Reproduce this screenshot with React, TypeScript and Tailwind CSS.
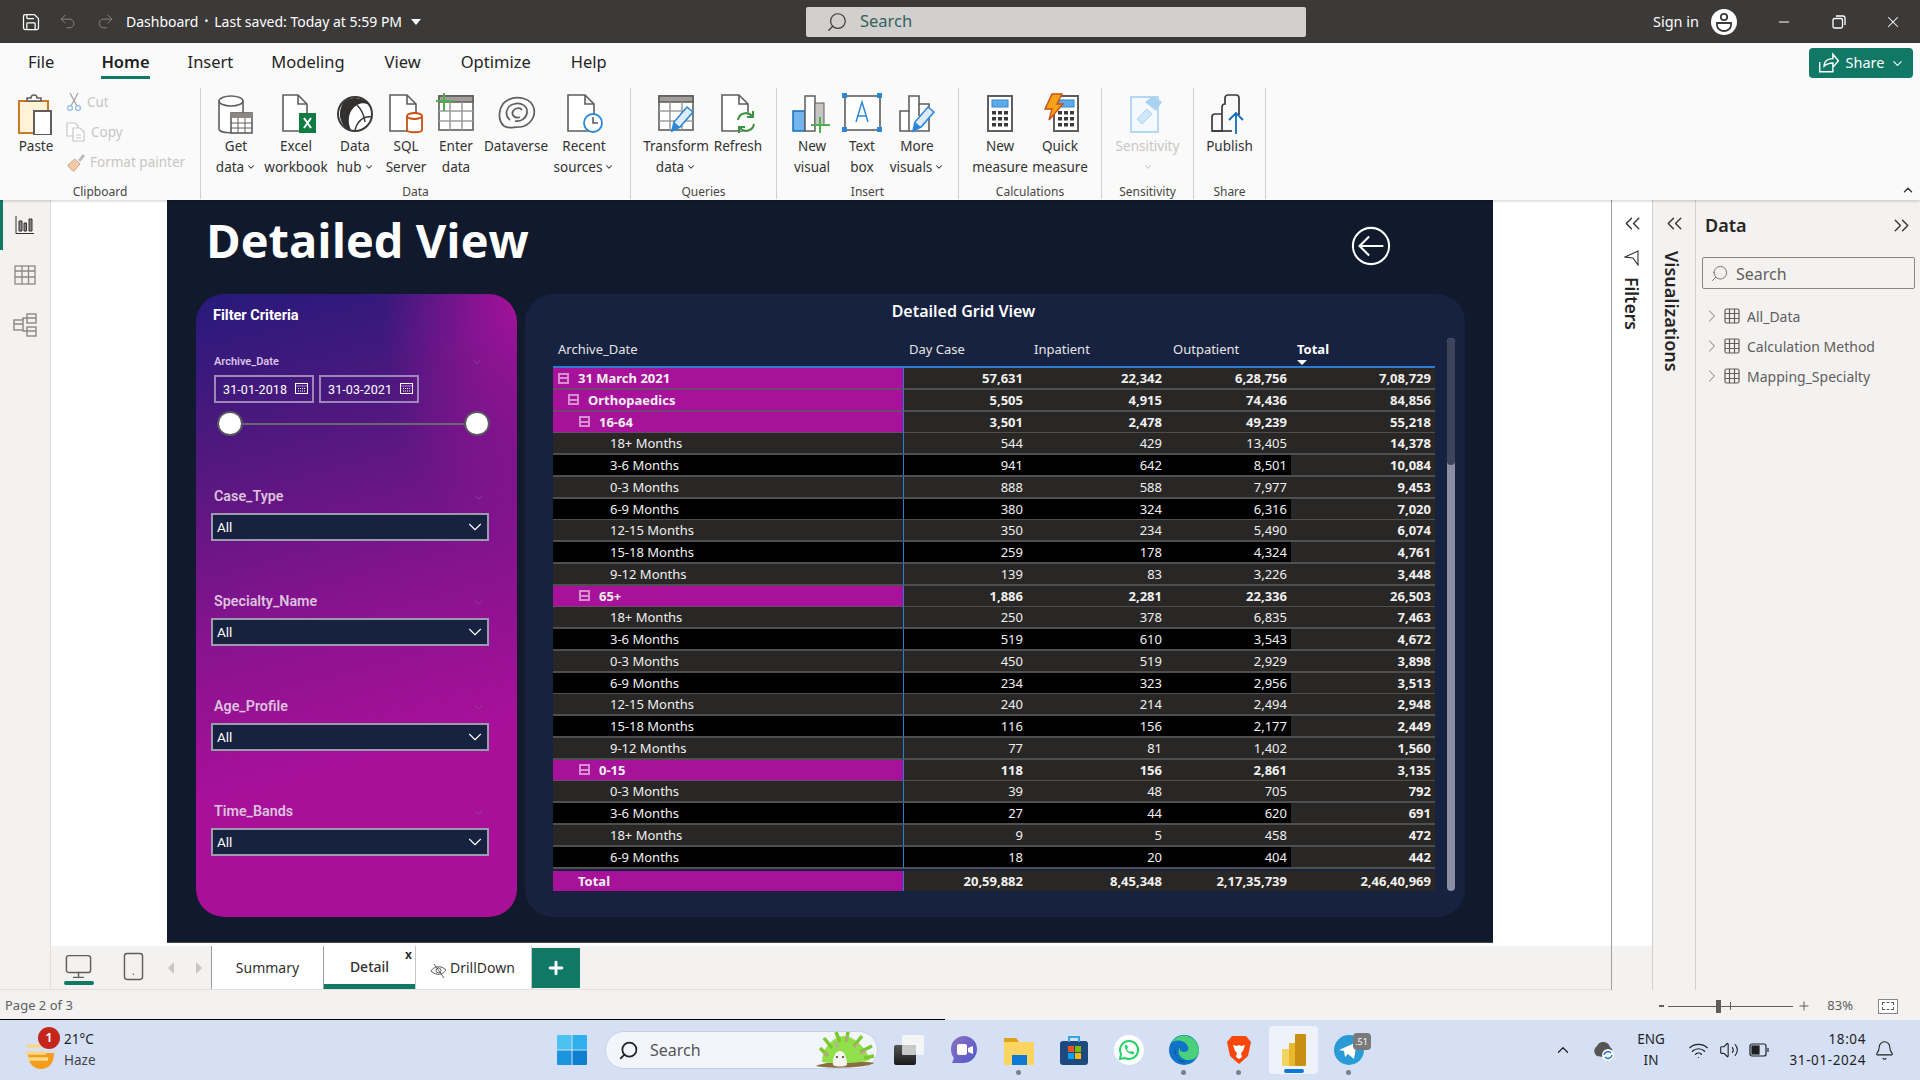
import {
  Bell,
  ChevronDown,
  ChevronRight,
  ChevronUp,
  ChevronsLeft,
  ChevronsRight,
  Minus,
  Monitor,
  Plus,
  Redo2,
  Save,
  Search,
  Smartphone,
  Undo2,
  Volume2,
  Wifi,
  X,
} from "lucide-react";
import type { ReactNode } from "react";

const G = "#605e5c";

const DocShape = ({ x = 8, w = 22, h = 36 }: { x?: number; w?: number; h?: number }) => (
  <path d={`M${x} 2h${w - 9}l9 9v${h - 9}h-${w}z M${x + w - 9} 2v9h9`} fill="#fff" stroke={G} strokeWidth="1.6" />
);

const Pencil = ({ dx = 0, dy = 0 }: { dx?: number; dy?: number }) => (
  <g transform={`translate(${dx} ${dy})`}>
    <path d="M14 36l2-9 13-15 6 5-13 15z" fill="#deecf9" stroke="#2b88d8" strokeWidth="1.6" />
    <path d="M14 36l2-9 6 5z" fill="#2b88d8" />
  </g>
);

const GridShape = () => (
  <g stroke={G} strokeWidth="1.6" fill="#fff">
    <rect x="3" y="3" width="34" height="34" />
    <rect x="3" y="3" width="34" height="6" fill="#a19f9d" />
    <path d="M14 9v28M26 9v28M3 18h34M3 28h34" fill="none" stroke="#a19f9d" />
  </g>
);

const Calc = ({ x = 6 }: { x?: number }) => (
  <g>
    <rect x={x} y="3" width="24" height="35" fill="#fff" stroke={G} strokeWidth="2" />
    <rect x={x + 4} y="7" width="16" height="7" fill="#5ea9e6" stroke="#2b88d8" />
    {[18, 24, 30].map((y) => [4, 10, 16].map((d) => <rect key={`${y}${d}`} x={x + d} y={y} width="4" height="3.5" fill="#3b3a39" />))}
  </g>
);

const ribbonIcons: Record<string, ReactNode> = {
  paste: (
    <>
      <path d="M3 8h29v32H3z" fill="#fff3d6" stroke="#c8792a" strokeWidth="2" />
      <path d="M11 8V5h4a3 3 0 0 1 6 0h4v3z" fill="#fff" stroke={G} strokeWidth="1.5" />
      <rect x="18" y="18" width="17" height="24" fill="#fff" stroke={G} strokeWidth="2" />
    </>
  ),
  getdata: (
    <>
      <path d="M3 8v28c0 5 24 5 24 0V8" fill="#fff" stroke={G} strokeWidth="1.6" />
      <ellipse cx="15" cy="8" rx="12" ry="5" fill="#fff" stroke={G} strokeWidth="1.6" />
      <rect x="15" y="20" width="21" height="20" fill="#fff" stroke={G} strokeWidth="1.6" />
      <rect x="15" y="20" width="21" height="5" fill="#8a8886" />
      <path d="M22 25v15M29 25v15M15 30h21M15 35h21" stroke={G} />
    </>
  ),
  excel: (
    <>
      <DocShape x={7} w={24} />
      <rect x="23" y="20" width="17" height="20" fill="#107c41" />
      <path d="M28 25l7 10M35 25l-7 10" stroke="#fff" strokeWidth="2" />
    </>
  ),
  hub: (
    <>
      <circle cx="20" cy="21" r="17" fill="#fff" stroke="#3b3a39" strokeWidth="2" />
      <path d="M8 10c-6 10-3 24 8 27-4-8-3-20 6-25 5-3 11-2 14 2C32 5 16 1 8 10z" fill="#323130" />
      <path d="M20 37c3-10 9-14 17-13M22 12c4 4 7 9 8 17" fill="none" stroke="#3b3a39" strokeWidth="1.5" />
    </>
  ),
  sql: (
    <>
      <DocShape x={4} w={26} />
      <path d="M21 23v14c0 3 15 3 15 0V23" fill="#fff" stroke="#ca5010" strokeWidth="1.8" />
      <ellipse cx="28.5" cy="23" rx="7.5" ry="3" fill="#fff" stroke="#ca5010" strokeWidth="1.8" />
    </>
  ),
  enter: (
    <>
      <GridShape />
      <path d="M8 0v18M0 8h18" stroke="#4caf50" strokeWidth="2" />
    </>
  ),
  dataverse: (
    <g fill="none" stroke={G} strokeWidth="1.7">
      <path d="M8 33C1 27 2 12 12 7c9-5 24-2 26 9 2 10-7 18-15 18-6 0-11 2-15-1z" />
      <path d="M14 27c-6-5-4-14 4-16 7-2 14 2 13 9-1 6-7 9-12 8" />
      <path d="M24 24c-5 2-9-2-7-6 2-3 7-4 9-1" />
    </g>
  ),
  recent: (
    <>
      <DocShape x={4} w={26} />
      <circle cx="29" cy="30" r="9" fill="#fff" stroke="#2b88d8" strokeWidth="1.8" />
      <path d="M29 24v6h5" fill="none" stroke={G} strokeWidth="1.6" />
    </>
  ),
  transform: (
    <>
      <GridShape />
      <Pencil dx={2} dy={2} />
    </>
  ),
  refresh: (
    <>
      <DocShape x={4} w={26} />
      <circle cx="28" cy="29" r="10" fill="#fff" stroke="none" />
      <path d="M20 27a8 8 0 0 1 14-4M36 31a8 8 0 0 1-14 4" fill="none" stroke="#3f9142" strokeWidth="2" />
      <path d="M35 18v6h-6M21 40v-6h6" fill="none" stroke="#3f9142" strokeWidth="2" />
    </>
  ),
  newvisual: (
    <>
      <rect x="1" y="18" width="12" height="20" fill="#74b5ec" stroke="#106ebe" strokeWidth="1.5" />
      <rect x="13" y="3" width="10" height="35" fill="#fff" stroke={G} strokeWidth="1.5" />
      <rect x="23" y="10" width="9" height="22" fill="#c8c6c4" stroke={G} />
      <path d="M28 24v16M19 32h19" stroke="#4caf50" strokeWidth="2" />
    </>
  ),
  textbox: (
    <>
      <rect x="3" y="3" width="35" height="34" fill="#fff" stroke={G} strokeWidth="1.6" />
      {[[0, 0], [35, 0], [0, 34], [35, 34]].map(([a, b]) => (
        <rect key={`${a}${b}`} x={a} y={b} width="5" height="5" fill="#2b88d8" />
      ))}
      <path d="M14 29l6-20 6 20M16 23h8" fill="none" stroke="#2b88d8" strokeWidth="1.5" />
    </>
  ),
  morevisuals: (
    <>
      <path d="M3 38V18h9V3h10v8h10v27z" fill="#fff" stroke={G} strokeWidth="1.6" />
      <path d="M12 18v20M22 11v12" stroke={G} strokeWidth="1.6" />
      <Pencil dx={2} dy={2} />
    </>
  ),
  newmeasure: <Calc x={8} />,
  quickmeasure: (
    <>
      <Calc x={14} />
      <path d="M12 1h10l-5 10h6L9 27l3-11H5z" fill="#f7a21b" stroke="#ca5010" strokeWidth="1.4" />
    </>
  ),
  sensitivity: (
    <>
      <rect x="4" y="4" width="27" height="35" fill="#f4f9fd" stroke="#a9d3f0" strokeWidth="1.7" />
      <path d="M10 26l10-10 5 5-10 10z" fill="#cfe6f7" stroke="#a9d3f0" />
      <path d="M18 9l8-6 9 6-6 9z" fill="#a9d3f0" />
    </>
  ),
  publish: (
    <g fill="none">
      <path d="M3 38V24a3 3 0 0 1 3-3h7v17zM13 21V14a3 3 0 0 1 3-3V5a3 3 0 0 1 3-3h8a3 3 0 0 1 3 3v17" stroke="#3b3a39" strokeWidth="1.7" />
      <path d="M3 38h20" stroke="#3b3a39" strokeWidth="1.7" />
      <path d="M27 41V20M20 27l7-7 7 7" stroke="#106ebe" strokeWidth="1.8" />
    </g>
  ),
};

const RibbonItem = ({
  icon,
  lines,
  w,
  caret,
  faded,
}: {
  icon: string;
  lines: string[];
  w: number;
  caret?: boolean;
  faded?: boolean;
}) => (
  <div className={`flex flex-col items-center shrink-0 pt-[5px] ${faded ? "text-[#c8c6c4]" : "text-[#323130]"}`} style={{ width: w }}>
    <svg width="41" height="42" viewBox="0 0 41 42" className="shrink-0">
      {ribbonIcons[icon]}
    </svg>
    <div className="mt-[1px] text-[13.5px] leading-[20px] text-center whitespace-nowrap">
      {lines.map((l, i) => (
        <div key={l} className="flex items-center justify-center gap-[2px] h-[20.5px]">
          {l}
          {caret && i === lines.length - 1 && <ChevronDown size={10} strokeWidth={2.5} />}
        </div>
      ))}
    </div>
  </div>
);

const RibbonGroup = ({ label, w, pl = 0, children }: { label: string; w: number; pl?: number; children: ReactNode }) => (
  <div className="flex flex-col shrink-0 border-r border-[#d2d0ce] h-[111px]" style={{ width: w }}>
    <div className="flex flex-1" style={{ paddingLeft: pl }}>
      {children}
    </div>
    <div className="text-[12px] leading-[14px] text-center text-[#484644]">{label}</div>
  </div>
);

const TitleBar = () => (
  <div className="h-[43px] bg-[#3b3a39] flex items-center text-white shrink-0">
    <Save size={20} strokeWidth={1.5} className="ml-[21px]" />
    <Undo2 size={19} strokeWidth={1.2} className="ml-[17px] text-[#8a8886]" />
    <Redo2 size={19} strokeWidth={1.2} className="ml-[19px] text-[#8a8886]" />
    <div className="ml-[11px] w-[306px] text-[14px] flex items-center whitespace-nowrap">
      Dashboard <span className="mx-[6px] text-[10px]">•</span> Last saved: Today at 5:59 PM
      <span className="ml-[9px] border-x-[5px] border-t-[6px] border-x-transparent border-t-white" />
    </div>
    <div className="ml-[374px] w-[500px] h-[30px] bg-[#d2d0ce] rounded-[2px] flex items-center pl-[20px] text-[#33625c] text-[16.5px]">
      <Search size={22} strokeWidth={1.3} className="-scale-x-100 text-[#3b3a39]" />
      <span className="ml-[12px]">Search</span>
    </div>
    <div className="ml-[347px] text-[14.5px] w-[58px]">Sign in</div>
    <div className="w-[26px] h-[26px] rounded-full bg-white flex items-center justify-center">
      <svg width="18" height="20" viewBox="0 0 18 20" fill="none" stroke="#3b3a39" strokeWidth="1.8">
        <circle cx="9" cy="5" r="3.2" />
        <path d="M2 11h14v2a7 6 0 0 1-14 0z" />
      </svg>
    </div>
    <Minus size={16} strokeWidth={1.5} className="ml-[39px]" />
    <svg width="14" height="14" viewBox="0 0 14 14" fill="none" stroke="#fff" strokeWidth="1.3" className="ml-[40px]">
      <rect x="1" y="3.5" width="9.5" height="9.5" rx="1.5" />
      <path d="M4 1h7a2 2 0 0 1 2 2v7" />
    </svg>
    <X size={18} strokeWidth={1.4} className="ml-[38px]" />
  </div>
);

const Ribbon = () => (
  <div className="h-[157px] bg-[#fafafa] shrink-0 relative z-10 shadow-[0_1px_3px_rgba(0,0,0,0.2)]">
    <div className="h-[45px] flex items-start text-[16.5px] text-[#252423] pt-[7px]">
      <span className="ml-[28px]">File</span>
      <span className="ml-[47px] font-semibold text-[#201f1e] border-b-[3px] border-[#117865] h-[29px] leading-[23px]">Home</span>
      <span className="ml-[38px]">Insert</span>
      <span className="ml-[38px]">Modeling</span>
      <span className="ml-[40px]">View</span>
      <span className="ml-[40px]">Optimize</span>
      <span className="ml-[40px]">Help</span>
      <div className="ml-auto mt-[-2px] mr-[7px] w-[104px] h-[30px] rounded-[4px] bg-[#117865] text-white flex items-center justify-center gap-[6px] text-[14.5px]">
        <svg width="23" height="22" viewBox="0 0 20 20" fill="none" stroke="#fff" strokeWidth="1.3">
          <path d="M2 9v9h12v-3M6 13c0-5 4-7 8-7V2l5 6-5 6v-4c-4 0-6 1-8 3z" />
        </svg>
        Share
        <ChevronDown size={15} strokeWidth={1.8} />
      </div>
    </div>
    <div className="flex">
      <RibbonGroup label="Clipboard" w={201}>
        <div className="w-[72px] flex flex-col items-center shrink-0 pt-[5px]">
          <svg width="41" height="42" viewBox="0 0 41 42">
            {ribbonIcons.paste}
          </svg>
          <div className="mt-[1px] text-[13.5px] leading-[20px] text-[#323130]">Paste</div>
        </div>
        <div className="flex flex-col text-[13.5px] text-[#c8c6c4] pt-[3px] gap-[8px] -ml-[5px]">
          <div className="flex items-center gap-[6px] h-[22px]">
            <svg width="14" height="20" viewBox="0 0 14 20" fill="none" stroke="#a19f9d" strokeWidth="1.2">
              <path d="M3 1l7 13M11 1L4 14" />
              <circle cx="3" cy="16" r="2.4" stroke="#8dbde4" />
              <circle cx="11" cy="16" r="2.4" stroke="#8dbde4" />
            </svg>
            Cut
          </div>
          <div className="flex items-center gap-[5px] h-[22px] -ml-[1px]">
            <svg width="20" height="20" viewBox="0 0 20 20" fill="none" stroke="#c8c6c4" strokeWidth="1.2">
              <path d="M1 1h8l3 3v10H1z" fill="#fff" />
              <path d="M7 6h7l4 4v9H7z" fill="#fff" />
              <path d="M10 13h5M10 16h5" />
            </svg>
            Copy
          </div>
          <div className="flex items-center gap-[4px] h-[22px] -ml-[1px]">
            <svg width="20" height="20" viewBox="0 0 20 20" fill="none">
              <path d="M2 13l7-6 5 5-6 7c-2 0-5-3-6-6z" fill="#f4c9a4" stroke="#c8a78a" />
              <path d="M12 8l5-6 2 2-5 6z" fill="#bbb" />
            </svg>
            Format painter
          </div>
        </div>
      </RibbonGroup>
      <RibbonGroup label="Data" w={430} pl={4}>
        <RibbonItem icon="getdata" lines={["Get", "data"]} w={62} caret />
        <RibbonItem icon="excel" lines={["Excel", "workbook"]} w={58} />
        <RibbonItem icon="hub" lines={["Data", "hub"]} w={60} caret />
        <RibbonItem icon="sql" lines={["SQL", "Server"]} w={42} />
        <RibbonItem icon="enter" lines={["Enter", "data"]} w={58} />
        <RibbonItem icon="dataverse" lines={["Dataverse"]} w={62} />
        <RibbonItem icon="recent" lines={["Recent", "sources"]} w={74} caret />
      </RibbonGroup>
      <RibbonGroup label="Queries" w={146} pl={13}>
        <RibbonItem icon="transform" lines={["Transform", "data"]} w={64} caret />
        <RibbonItem icon="refresh" lines={["Refresh"]} w={60} />
      </RibbonGroup>
      <RibbonGroup label="Insert" w={182} pl={8}>
        <RibbonItem icon="newvisual" lines={["New", "visual"]} w={54} />
        <RibbonItem icon="textbox" lines={["Text", "box"]} w={46} />
        <RibbonItem icon="morevisuals" lines={["More", "visuals"]} w={64} caret />
      </RibbonGroup>
      <RibbonGroup label="Calculations" w={143} pl={9}>
        <RibbonItem icon="newmeasure" lines={["New", "measure"]} w={64} />
        <RibbonItem icon="quickmeasure" lines={["Quick", "measure"]} w={56} />
      </RibbonGroup>
      <RibbonGroup label="Sensitivity" w={92}>
        <RibbonItem icon="sensitivity" lines={["Sensitivity", ""]} w={91} faded caret />
      </RibbonGroup>
      <RibbonGroup label="Share" w={72}>
        <RibbonItem icon="publish" lines={["Publish"]} w={71} />
      </RibbonGroup>
    </div>
    <ChevronUp size={14} strokeWidth={2.5} className="absolute right-[5px] bottom-[3px] text-[#3b3a39]" />
  </div>
);

const LeftNav = () => (
  <div className="w-[51px] shrink-0 bg-[#f3f2f1] border-r border-[#e1dfdd] flex flex-col">
    <div className="h-[50px] border-l-[3px] border-[#117865] flex items-center justify-center pr-[3px]">
      <svg width="20" height="20" viewBox="0 0 20 20" fill="#8a8886" stroke="#323130" strokeWidth="1">
        <path d="M1 1v17.500h18" fill="none" />
        <path d="M4 6h3v10H4zM9 8h2.500v8H9zM14 4h3v12h-3z" />
      </svg>
    </div>
    <div className="h-[50px] flex items-center justify-center">
      <svg width="22" height="20" viewBox="0 0 22 20" fill="none" stroke="#8a8886" strokeWidth="1.3">
        <rect x="1" y="1" width="20" height="18" />
        <path d="M1 6h20M1 12h20M8 1v18M14.500 1v18" />
      </svg>
    </div>
    <div className="h-[50px] flex items-center justify-center">
      <svg width="24" height="24" viewBox="0 0 24 24" fill="none" stroke="#8a8886" strokeWidth="1.4">
        <rect x="1" y="7" width="9" height="10" />
        <rect x="14" y="1" width="9" height="9" />
        <rect x="14" y="14" width="9" height="9" />
        <path d="M1 11h9M14 5h9M14 18h9M10 7V5h4M10 17v1h4" />
      </svg>
    </div>
  </div>
);

type RowData = { label: string; vals: string[]; level?: number };

const treeTop: RowData[] = [
  { label: "31 March 2021", vals: ["57,631", "22,342", "6,28,756", "7,08,729"], level: 0 },
  { label: "Orthopaedics", vals: ["5,505", "4,915", "74,436", "84,856"], level: 1 },
  { label: "16-64", vals: ["3,501", "2,478", "49,239", "55,218"], level: 2 },
  { label: "18+ Months", vals: ["544", "429", "13,405", "14,378"] },
  { label: "3-6 Months", vals: ["941", "642", "8,501", "10,084"] },
  { label: "0-3 Months", vals: ["888", "588", "7,977", "9,453"] },
  { label: "6-9 Months", vals: ["380", "324", "6,316", "7,020"] },
  { label: "12-15 Months", vals: ["350", "234", "5,490", "6,074"] },
  { label: "15-18 Months", vals: ["259", "178", "4,324", "4,761"] },
  { label: "9-12 Months", vals: ["139", "83", "3,226", "3,448"] },
  { label: "65+", vals: ["1,886", "2,281", "22,336", "26,503"], level: 2 },
  { label: "18+ Months", vals: ["250", "378", "6,835", "7,463"] },
  { label: "3-6 Months", vals: ["519", "610", "3,543", "4,672"] },
  { label: "0-3 Months", vals: ["450", "519", "2,929", "3,898"] },
  { label: "6-9 Months", vals: ["234", "323", "2,956", "3,513"] },
  { label: "12-15 Months", vals: ["240", "214", "2,494", "2,948"] },
  { label: "15-18 Months", vals: ["116", "156", "2,177", "2,449"] },
  { label: "9-12 Months", vals: ["77", "81", "1,402", "1,560"] },
  { label: "0-15", vals: ["118", "156", "2,861", "3,135"], level: 2 },
  { label: "0-3 Months", vals: ["39", "48", "705", "792"] },
  { label: "3-6 Months", vals: ["27", "44", "620", "691"] },
  { label: "18+ Months", vals: ["9", "5", "458", "472"] },
  { label: "6-9 Months", vals: ["18", "20", "404", "442"] },
];

const COLS = "grid grid-cols-[351px_123px_139px_125px_144px]";

const TreeRow = ({ row, black }: { row: RowData; black: boolean }) => {
  const isGroup = row.level !== undefined;
  const lv = row.level ?? 0;
  const indent = lv === 0 ? "pl-[5px]" : lv === 1 ? "pl-[15px]" : "pl-[26px]";
  return (
    <div className={`${COLS} h-[21.76px] text-[13px] leading-[20px] text-[#f0f0f0] ${isGroup ? "font-bold" : ""}`}>
      <div
        className={`border-r border-[#2b7cd3] border-b-2 flex items-center whitespace-nowrap ${
          isGroup ? `bg-[#a8119a] border-b-[#6d4a6b] ${indent}` : `pl-[57px] border-b-[#4f4f4f] ${black ? "bg-black" : "bg-[#282726]"}`
        }`}
      >
        {isGroup && (
          <span className="w-[11px] h-[11px] border-2 border-[#d68fce] mr-[9px] flex items-center justify-center shrink-0">
            <span className="w-[7px] h-[2px] bg-[#d68fce]" />
          </span>
        )}
        {row.label}
      </div>
      {row.vals.map((v, i) => (
        <div
          key={i}
          className={`border-b-2 border-b-[#4f4f4f] text-right pr-[4px] flex items-center justify-end ${
            black && i < 3 ? "bg-black" : "bg-[#282726]"
          } ${i === 3 ? "font-bold" : ""}`}
        >
          {v}
        </div>
      ))}
    </div>
  );
};

const GridCard = () => {
  let leaf = 0;
  return (
    <div className="w-[940px] h-[623px] shrink-0 rounded-[28px] bg-[#172240] pl-[28px] flex flex-col">
      <div className="w-[841px] text-center text-white font-semibold text-[16px] leading-[22px] pt-[6px] -ml-[10px]">Detailed Grid View</div>
      <div className="flex gap-[12px] mt-[16px]">
        <div className="w-[882px]">
          <div className={`${COLS} h-[30px] text-[13px] text-[#e6e6e6] border-b-2 border-[#2b7cd3] items-start pt-[2px]`}>
            <div className="pl-[5px]">Archive_Date</div>
            <div className="pl-[5px]">Day Case</div>
            <div className="pl-[7px]">Inpatient</div>
            <div className="pl-[7px]">Outpatient</div>
            <div className="pl-[6px] font-bold text-white relative">
              Total
              <span className="absolute left-[6px] top-[20px] border-x-[5px] border-t-[5px] border-x-transparent border-t-white" />
            </div>
          </div>
          {treeTop.map((r, i) => {
            const isGroup = r.level !== undefined;
            if (isGroup) leaf = 0;
            else leaf += 1;
            return <TreeRow key={i} row={r} black={!isGroup && leaf % 2 === 0} />;
          })}
          <div className={`${COLS} h-[20px] text-[13px] leading-[20px] font-bold text-[#f0f0f0] mt-[3px]`}>
            <div className="bg-[#a8119a] border-r border-[#2b7cd3] pl-[25px] flex items-center">Total</div>
            {["20,59,882", "8,45,348", "2,17,35,739", "2,46,40,969"].map((v) => (
              <div key={v} className="bg-[#282726] text-right pr-[4px] flex items-center justify-end">
                {v}
              </div>
            ))}
          </div>
        </div>
        <div className="w-[8px] h-[553px] rounded-[4px] bg-[#8b8ea3] overflow-hidden">
          <div className="h-[127px] bg-[#3d4459] rounded-[4px]" />
        </div>
      </div>
    </div>
  );
};

const SlicerHead = ({ label }: { label: string }) => (
  <div className="flex items-center justify-between pl-[3px] pr-[4px] h-[20px] text-[14.3px] font-semibold text-[#dcc2dd]">
    {label}
    <ChevronDown size={13} strokeWidth={1} className="text-[#8c6a98]" />
  </div>
);

const Dropdown = () => (
  <div className="h-[28px] border-2 border-[#9c9aad] bg-[#172240] flex items-center justify-between pl-[4px] pr-[1px] text-[13.5px] text-white mt-[6px]">
    All
    <ChevronDown size={22} strokeWidth={1.2} />
  </div>
);

const DateBox = ({ value }: { value: string }) => (
  <div className="w-[100px] h-[28px] border-2 border-[#9e86b8] flex items-center pl-[7px] text-[12.5px] text-white tracking-[0.1px] shrink-0">
    <span className="mt-[2px]">{value}</span>
    <svg width="13" height="12" viewBox="0 0 13 12" fill="none" stroke="#fff" strokeWidth="1" className="ml-[8px] mt-[-2px]">
      <rect x="0.500" y="1.500" width="12" height="10" />
      <path d="M0.500 4h12M3 6.500h7M3 9h7" strokeDasharray="1 1" />
    </svg>
  </div>
);

const FilterCard = () => (
  <div className="w-[321px] h-[623px] shrink-0 rounded-[28px] pl-[15px] pr-[28px] bg-[radial-gradient(ellipse_at_100%_0%,#a5119a_0%,transparent_30%),linear-gradient(165deg,#261a7a_0%,#52187f_24%,#85138f_48%,#a8109a_72%)] font-['Roboto',sans-serif]">
    <div className="text-[14.5px] font-bold text-white pl-[2px] pt-[13px] leading-[17px]">Filter Criteria</div>
    <div className="mt-[31px] flex items-center justify-between pl-[3px] pr-[6px] text-[11px] font-semibold text-[#dcc2e6] h-[14px]">
      Archive_Date
      <ChevronDown size={12} strokeWidth={1} className="text-[#8c6a98]" />
    </div>
    <div className="flex gap-[5px] mt-[6px] pl-[3px]">
      <DateBox value="31-01-2018" />
      <DateBox value="31-03-2021" />
    </div>
    <div className="relative h-[25px] mt-[8px] ml-[6px] mr-[-1px] flex items-center">
      <div className="h-[2px] w-full bg-[#6b6670] mx-[4px]" />
      <span className="absolute left-0 w-[26px] h-[25px] rounded-full bg-white border-2 border-[#5a5560]" />
      <span className="absolute right-0 w-[26px] h-[25px] rounded-full bg-white border-2 border-[#5a5560]" />
    </div>
    {[
      ["Case_Type", 51],
      ["Specialty_Name", 51],
      ["Age_Profile", 51],
      ["Time_Bands", 51],
    ].map(([label, mt]) => (
      <div key={label} style={{ marginTop: mt as number }}>
        <SlicerHead label={label as string} />
        <Dropdown />
      </div>
    ))}
  </div>
);

const ReportPage = () => (
  <div className="w-[1326px] h-[743px] bg-[#111a2c] border-b border-[#444] shrink-0">
    <div className="h-[94px] flex items-center pl-[39px] pr-[102px] justify-between">
      <div className="text-white font-bold text-[47px] leading-none font-['Open_Sans',sans-serif] mt-[-13px]">Detailed View</div>
      <svg width="40" height="40" viewBox="0 0 42 42" fill="none" stroke="#fff" strokeWidth="2.2" className="mt-[-3px]">
        <circle cx="21" cy="21" r="19" />
        <path d="M9 21h25M19 11L9 21l10 10" />
      </svg>
    </div>
    <div className="flex gap-[8px] pl-[29px]">
      <FilterCard />
      <GridCard />
    </div>
  </div>
);

const Tabs = () => (
  <div className="h-[44px] bg-[#f3f2f1] flex border-b border-[#e1dfdd] text-[14px] text-[#323130]">
    <div className="w-[51px] border-r border-[#e1dfdd] shrink-0" />
    <div className="w-[57px] flex flex-col items-center pt-[6px] relative shrink-0">
      <Monitor size={29} strokeWidth={1.2} className="text-[#605e5c] -ml-[2px]" />
      <span className="absolute bottom-[4px] left-[13px] w-[30px] h-[4px] rounded-full bg-[#117865]" />
    </div>
    <Smartphone size={31} strokeWidth={1.1} className="text-[#605e5c] mt-[5px] ml-[10px] shrink-0" />
    <div className="flex items-center ml-[19px] gap-[22px] shrink-0">
      <span className="border-y-[6px] border-r-[6px] border-y-transparent border-r-[#c8c6c4]" />
      <span className="border-y-[6px] border-l-[6px] border-y-transparent border-l-[#c8c6c4]" />
    </div>
    <div className="ml-[9px] w-[113px] bg-white border-x border-[#a19f9d] flex items-center justify-center shrink-0">Summary</div>
    <div className="w-[91px] bg-white flex items-center justify-center relative border-b-[5px] border-[#117865] font-medium shrink-0 pt-[2px]">
      Detail
      <span className="absolute right-[3px] top-[0px] text-[12px] font-bold">x</span>
    </div>
    <div className="w-[117px] bg-white border-x border-[#c8c6c4] flex items-center pl-[14px] gap-[2px] shrink-0">
      <svg width="18" height="18" viewBox="0 0 18 18" fill="none" stroke="#605e5c" strokeWidth="1" className="mt-[6px]">
        <path d="M1 9c3-5 10-6 15-1-3 5-10 6-15 1zM4 2l10 14" />
        <circle cx="8.500" cy="8.500" r="2.500" />
      </svg>
      DrillDown
    </div>
    <div className="w-[48px] h-[40px] mt-[2px] bg-[#117865] flex items-center justify-center shrink-0">
      <Plus size={20} strokeWidth={3.5} className="text-white" />
    </div>
  </div>
);

const Panels = () => (
  <div className="flex w-[309px] shrink-0 h-[790px]">
    <div className="w-[41px] flex flex-col items-center bg-white border-l border-[#a19f9d] relative">
      <ChevronsLeft size={25} strokeWidth={1.3} className="mt-[11px] text-[#323130]" />
      <svg width="16" height="16" viewBox="0 0 16 16" fill="none" stroke="#323130" strokeWidth="1.1" className="mt-[14px]">
        <path d="M1 7L14 1v14L9 8z" />
      </svg>
      <div className="[writing-mode:vertical-rl] mt-[11px] text-[17.5px] leading-[20px] font-semibold text-[#252423]">Filters</div>
      <div className="absolute bottom-0 left-0 right-0 h-[44px] bg-[#f3f2f1]" />
    </div>
    <div className="w-[43px] flex flex-col items-center bg-[#f3f2f1] border-l border-[#d2d0ce]">
      <ChevronsLeft size={25} strokeWidth={1.3} className="mt-[11px] text-[#323130]" />
      <div className="[writing-mode:vertical-rl] mt-[15px] text-[18px] leading-[22px] font-semibold text-[#252423] -ml-[5px]">Visualizations</div>
    </div>
    <div className="w-[225px] bg-[#f3f2f1] border-l border-[#d2d0ce] pl-[6px] pr-[5px]">
      <div className="flex items-center justify-between h-[50px] pl-[3px] pr-[1px]">
        <span className="text-[18px] font-semibold text-[#252423]">Data</span>
        <ChevronsRight size={25} strokeWidth={1.3} className="text-[#323130]" />
      </div>
      <div className="mt-[7px] h-[32px] border border-[#8a8886] rounded-[2px] flex items-center pl-[7px] gap-[7px] text-[16px] text-[#605e5c] bg-[#f3f2f1] pt-[1px]">
        <Search size={19} strokeWidth={1} className="-scale-x-100" />
        Search
      </div>
      <div className="mt-[12px] flex flex-col text-[14px] text-[#605e5c]">
        {["All_Data", "Calculation Method", "Mapping_Specialty"].map((n) => (
          <div key={n} className="h-[30px] flex items-center whitespace-nowrap">
            <ChevronRight size={20} strokeWidth={1} className="shrink-0" />
            <svg width="16" height="16" viewBox="0 0 16 16" fill="none" stroke="#605e5c" strokeWidth="1.2" className="ml-[2px] mr-[7px] shrink-0">
              <rect x="1" y="1" width="14" height="14" rx="1.500" />
              <path d="M1 5.500h14M1 10.500h14M5.500 1v14M10.500 1v14" />
            </svg>
            {n}
          </div>
        ))}
      </div>
    </div>
  </div>
);

const StatusBar = () => (
  <div className="h-[30px] bg-[#f3f2f1] relative flex items-center pl-[5px] text-[13px] text-[#605e5c] shrink-0 pt-[2px]">
    Page 2 of 3
    <div className="absolute left-0 bottom-0 w-[945px] h-[1px] bg-black" />
    <div className="ml-auto flex items-center text-[#605e5c] pr-[22px]">
      <span className="w-[5px] h-[2px] bg-[#605e5c]" />
      <div className="relative w-[125px] h-[1px] bg-[#605e5c] ml-[4px] flex items-center">
        <span className="absolute left-[48px] w-[5px] h-[13px] bg-[#605e5c]" />
        <span className="absolute left-[62px] w-[1px] h-[8px] bg-[#605e5c]" />
      </div>
      <Plus size={14} strokeWidth={1.7} className="ml-[4px]" />
      <span className="ml-[16px] text-[13px]">83%</span>
      <div className="ml-[25px] w-[20px] h-[15px] border border-[#8a8886] bg-[#fff] flex items-center justify-center">
        <span className="w-[12px] h-[8px] border border-dashed border-[#605e5c]" />
      </div>
    </div>
  </div>
);

const TaskIcon = ({ children, dot, active }: { children: ReactNode; dot?: boolean; active?: boolean }) => (
  <div className="w-[55px] h-[48px] flex items-center justify-center relative shrink-0">
    {active && <div className="absolute inset-x-[3px] inset-y-0 rounded-[4px] bg-[#eef2fb]" />}
    <div className="relative">{children}</div>
    {dot && <span className="absolute bottom-[-1px] left-[25px] w-[5px] h-[5px] rounded-full bg-[#7a7f8a]" />}
    {active && <span className="absolute bottom-[1px] left-[18px] w-[20px] h-[4px] rounded-full bg-[#0f78d4]" />}
  </div>
);

const Taskbar = () => (
  <div className="h-[60px] bg-[#d5e0f5] flex items-center relative text-[#1f1f1f] shrink-0">
    <div className="ml-[25px] relative w-[39px] h-[40px] shrink-0">
      <svg width="32" height="36" viewBox="0 0 32 36" className="absolute top-[6px] left-0">
        <path d="M3 17h26c0 11-6 16-13 16S3 28 3 17z" fill="#f59c1a" />
        <path d="M2 10h14M1 17h20M3 23h20" stroke="#f9d688" strokeWidth="3.500" />
      </svg>
      <span className="absolute left-[13px] top-[-3px] w-[22px] h-[22px] rounded-full bg-[#c4261d] text-white text-[13px] font-semibold flex items-center justify-center">1</span>
    </div>
    <div className="flex flex-col text-[13.5px] leading-[21px] w-[40px] shrink-0">
      <span>21°C</span>
      <span className="text-[#444]">Haze</span>
    </div>
    <svg width="30" height="30" viewBox="0 0 30 30" className="ml-[453px] shrink-0">
      <path d="M1 0h13.500v14.500H0V1a1 1 0 0 1 1-1z" fill="#4cc2f1" />
      <path d="M15.500 0H29a1 1 0 0 1 1 1v13.500H15.500z" fill="#2fb0ec" />
      <path d="M0 15.500h14.500V30H1a1 1 0 0 1-1-1z" fill="#1a95de" />
      <path d="M15.500 15.500H30V29a1 1 0 0 1-1 1H15.500z" fill="#0d7fd0" />
    </svg>
    <div className="ml-[18px] w-[273px] h-[38px] rounded-full bg-[#f2f5fc] border border-[#c6d2e8] flex items-center pl-[12px] relative shrink-0">
      <Search size={21} strokeWidth={2} className="-scale-x-100 text-[#222]" />
      <span className="ml-[11px] text-[16px] text-[#555]">Search</span>
      <svg width="62" height="38" viewBox="0 0 62 38" className="absolute right-[-1px] top-[-2px]">
        <path d="M0 36c10-5 46-6 58-3-6 5-46 6-58 3z" fill="#8a6f3e" />
        <path d="M6 32C6 18 18 6 28 6s22 12 26 24c-14 4-34 4-48 2z" fill="#8fe04a" />
        <path d="M12 26L4 18M16 18L8 8M24 12L20 2M30 12l2-10M38 16l8-10M44 22l12-6M48 28l10-2" stroke="#79c92e" strokeWidth="3.500" />
        <path d="M12 26L8 22M22 18l-3-6M30 12l1-6M38 18l4-5M44 24l6-3" stroke="#e58ab8" strokeWidth="1.500" />
        <path d="M17 35c-1-8 3-14 7-14s7 6 7 14c-4 2-10 2-14 0z" fill="#f5f3ee" />
        <circle cx="21" cy="27" r="1" fill="#333" />
        <circle cx="27" cy="27" r="1" fill="#333" />
      </svg>
    </div>
    <div className="ml-[3px] flex items-center shrink-0">
      <TaskIcon>
        <div className="relative w-[30px] h-[30px]">
          <div className="absolute right-0 top-0 w-[22px] h-[20px] rounded-[2px] bg-[#f4f5f7]" />
          <div className="absolute left-0 bottom-0 w-[22px] h-[20px] rounded-[2px] bg-[linear-gradient(180deg,#555_0%,#1a1a1a_100%)]" />
          <div className="absolute left-[8px] top-[10px] w-[14px] h-[10px] bg-[#c8c8c8] rounded-[1px]" />
        </div>
      </TaskIcon>
      <TaskIcon>
        <svg width="28" height="30" viewBox="0 0 28 30">
          <defs>
            <linearGradient id="meet" x1="0" y1="0" x2="1" y2="1">
              <stop offset="0" stopColor="#8f6fc0" />
              <stop offset="1" stopColor="#4f5bcb" />
            </linearGradient>
          </defs>
          <path d="M14 1a13 13 0 0 1 13 13c0 8-6 14-14 14H2l2-5C2 21 1 18 1 14A13 13 0 0 1 14 1z" fill="url(#meet)" />
          <rect x="7" y="9" width="10" height="11" rx="2" fill="#fff" />
          <path d="M18 13l5-2v8l-5-2z" fill="#fff" />
        </svg>
      </TaskIcon>
      <TaskIcon dot>
        <svg width="32" height="29" viewBox="0 0 32 29">
          <path d="M1 2h12l3 4h15v23H1z" fill="#fcd462" />
          <path d="M1 2h12l3 4H1z" fill="#e0a21a" />
          <rect x="9" y="19" width="15" height="10" fill="#0f78d4" />
        </svg>
      </TaskIcon>
      <TaskIcon>
        <svg width="30" height="30" viewBox="0 0 30 30">
          <rect x="1" y="6" width="28" height="24" rx="3" fill="#1d4a7e" />
          <path d="M10 7V2h10v5" fill="none" stroke="#35a8e0" strokeWidth="2" />
          <path d="M9 11h6v6H9z" fill="#f25022" />
          <path d="M16 11h6v6h-6z" fill="#7fba00" />
          <path d="M9 18h6v6H9z" fill="#00a4ef" />
          <path d="M16 18h6v6h-6z" fill="#ffb900" />
        </svg>
      </TaskIcon>
      <TaskIcon>
        <svg width="30" height="30" viewBox="0 0 30 30">
          <circle cx="15" cy="15" r="15" fill="#fff" />
          <path d="M15 6a9 9 0 0 0-8 13l-1 5 5-1a9 9 0 1 0 4-17z" fill="none" stroke="#25d366" strokeWidth="2" />
          <path d="M11 10c-1 5 4 10 9 9l0-2-3-1-1 1c-2-1-3-2-3-3l1-1-1-3z" fill="#25d366" />
        </svg>
      </TaskIcon>
      <TaskIcon dot>
        <svg width="30" height="30" viewBox="0 0 30 30">
          <circle cx="15" cy="15" r="15" fill="#1173c7" />
          <path d="M30 15a15 15 0 0 0-28-7c5-4 13-3 16 2 3 4 1 7-3 7-5 0-4-3-4-5-4 6 1 13 9 13 6 0 10-4 10-10z" fill="#4ad07a" />
          <path d="M6 12c-2 7 3 14 11 15-6 1-11-4-11-15z" fill="#0d3f80" />
        </svg>
      </TaskIcon>
      <TaskIcon dot>
        <svg width="26" height="30" viewBox="0 0 26 30">
          <path d="M6 1h14l5 6-3 14-9 8-9-8L1 7z" fill="#f7470c" />
          <path d="M7 10l4 1 2-1 2 1 4-1-2 6-2 2 1 4-3 2-3-2 1-4-2-2z" fill="#fff" />
        </svg>
      </TaskIcon>
      <TaskIcon active>
        <svg width="24" height="32" viewBox="0 0 24 32">
          <rect x="0" y="15" width="11" height="17" rx="1" fill="#f2d560" />
          <rect x="7" y="9" width="11" height="23" rx="1" fill="#e8b92c" />
          <rect x="13" y="0" width="11" height="32" rx="1" fill="#c98f13" />
        </svg>
      </TaskIcon>
      <TaskIcon dot>
        <div className="relative">
          <svg width="30" height="30" viewBox="0 0 30 30">
            <circle cx="15" cy="15" r="15" fill="#2a9bd4" />
            <path d="M5 15l18-8-3 17-6-5-3 3-1-6z" fill="#fff" />
          </svg>
          <span className="absolute -right-[7px] -top-[2px] w-[18px] h-[17px] rounded-[4px] bg-[#7a7a7a] text-white text-[9px] flex items-center justify-center">.51</span>
        </div>
      </TaskIcon>
    </div>
    <ChevronUp size={18} strokeWidth={1.6} className="ml-[178px] shrink-0" />
    <svg width="22" height="24" viewBox="0 0 22 24" className="ml-[21px] shrink-0">
      <path d="M4 18a6 6 0 0 1 0-10 7 7 0 0 1 13 1 4 4 0 0 1 2 5H10v5z" fill="#555" />
      <circle cx="15" cy="17" r="6" fill="#fff" />
      <path d="M11 17a4 4 0 0 1 7-2M19 17a4 4 0 0 1-7 2" fill="none" stroke="#1473c6" strokeWidth="1.500" />
    </svg>
    <div className="ml-[18px] w-[36px] text-center text-[13.5px] leading-[21px] shrink-0">
      <div>ENG</div>
      <div>IN</div>
    </div>
    <Wifi size={21} strokeWidth={1.4} className="ml-[19px] shrink-0" />
    <Volume2 size={20} strokeWidth={1.3} className="ml-[10px] shrink-0" />
    <svg width="20" height="14" viewBox="0 0 20 14" fill="none" stroke="#1f1f1f" strokeWidth="1.2" className="ml-[10px] shrink-0">
      <rect x="1" y="1" width="16" height="12" rx="2" />
      <rect x="3" y="3" width="7" height="8" fill="#1f1f1f" />
      <path d="M19 5v4" />
    </svg>
    <div className="ml-[18px] w-[79px] text-right text-[13.5px] leading-[21px] shrink-0 whitespace-nowrap tracking-[0.6px]">
      <div>18:04</div>
      <div>31-01-2024</div>
    </div>
    <Bell size={21} strokeWidth={1.2} className="ml-[8px] shrink-0" />
  </div>
);

export default function App() {
  return (
    <div className="w-[1920px] h-[1080px] overflow-hidden flex flex-col bg-white font-['Noto_Sans',sans-serif]">
      <TitleBar />
      <Ribbon />
      <div className="flex flex-1 min-h-0">
        <div className="w-[1611px] shrink-0 flex flex-col">
          <div className="flex h-[746px] shrink-0">
            <LeftNav />
            <div className="flex-1 bg-white pl-[116px]">
              <ReportPage />
            </div>
          </div>
          <Tabs />
        </div>
        <Panels />
      </div>
      <StatusBar />
      <Taskbar />
    </div>
  );
}
